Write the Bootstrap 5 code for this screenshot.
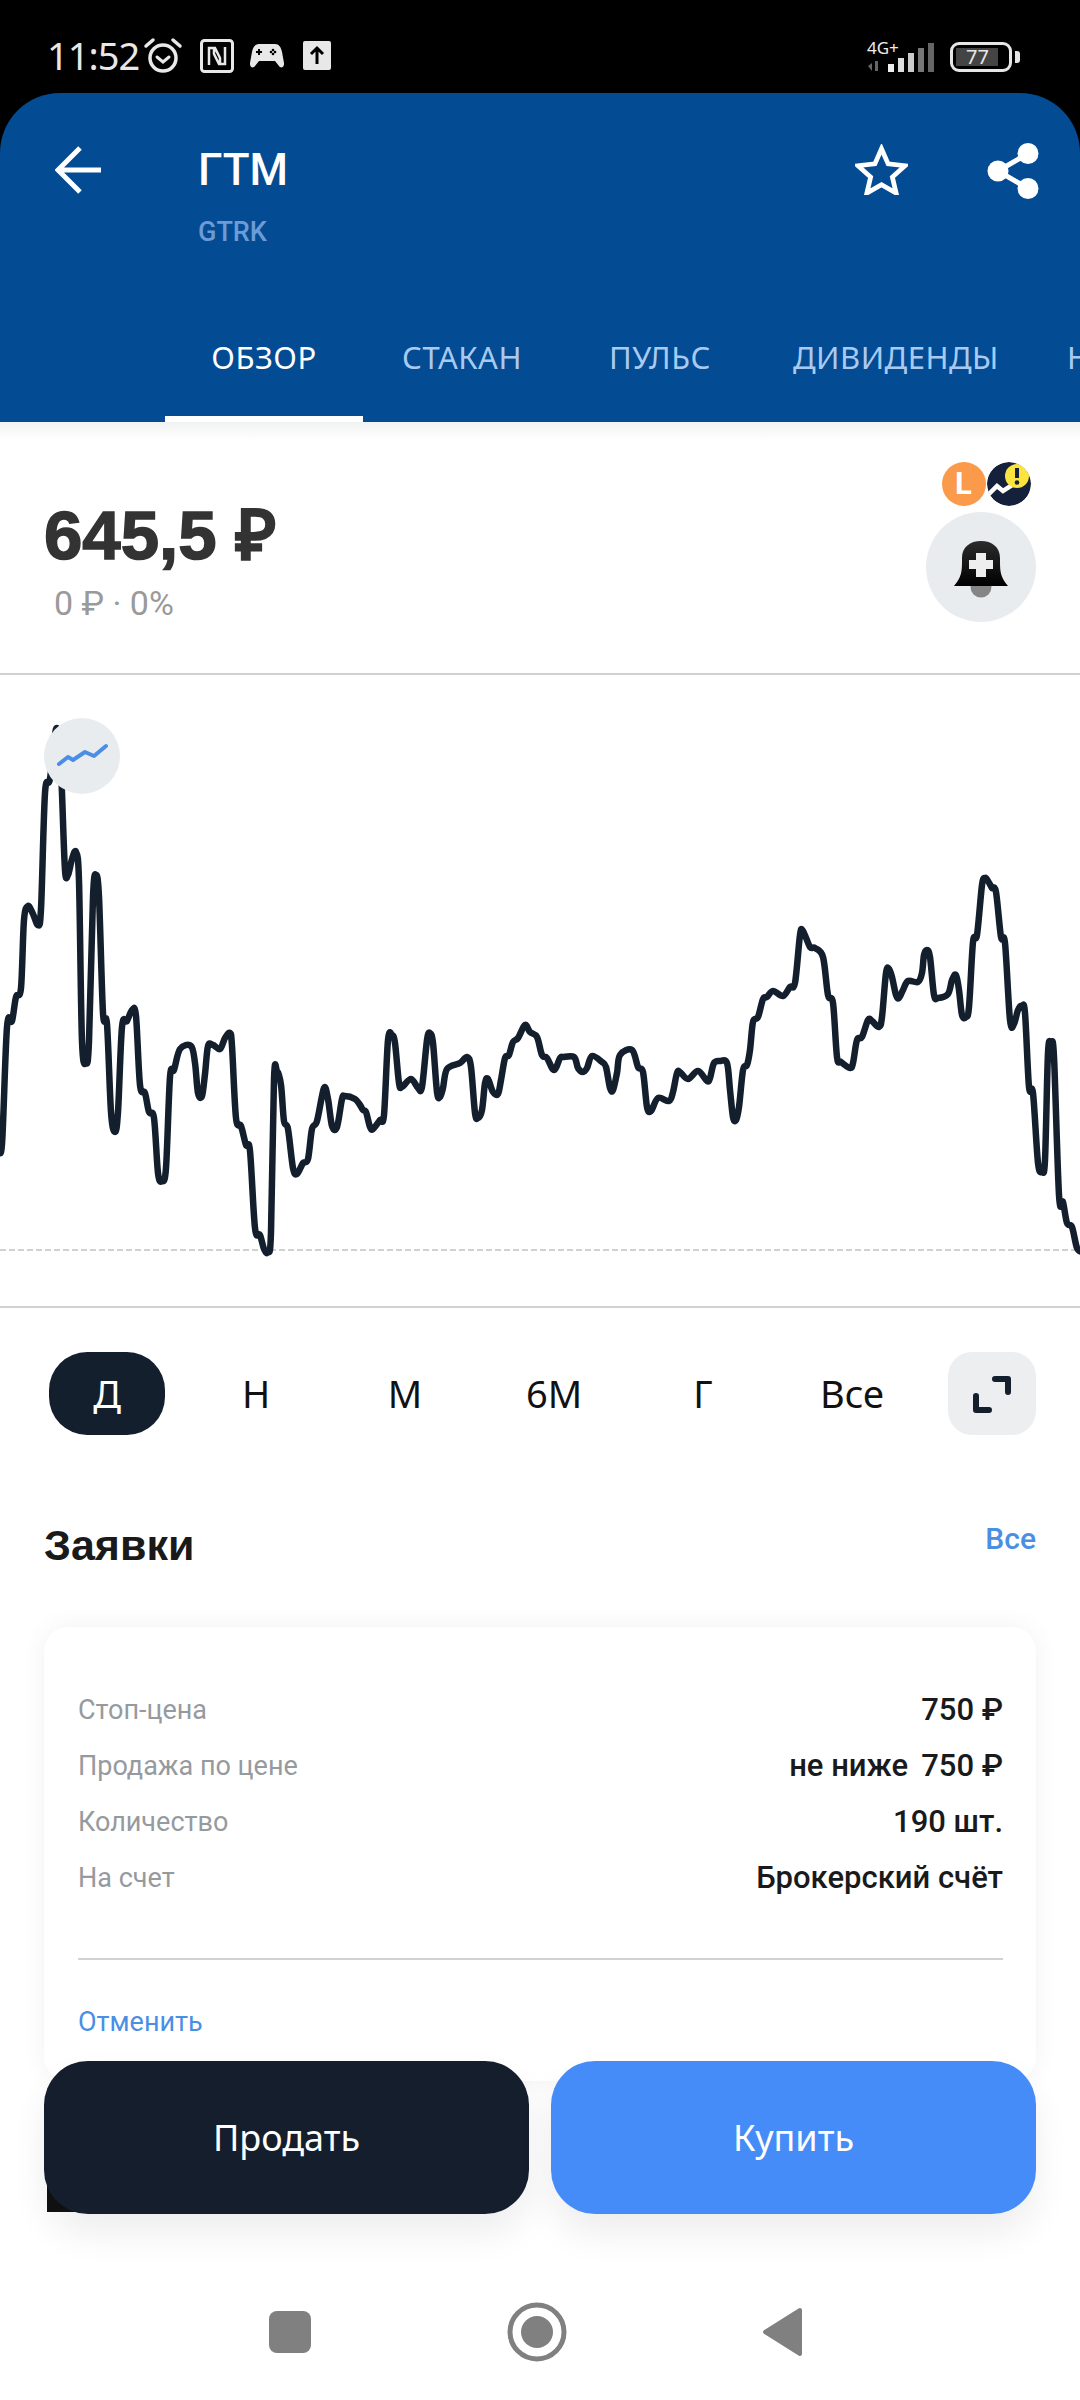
<!DOCTYPE html>
<html lang="ru">
<head>
    <meta charset="UTF-8">
    <meta name="viewport" content="width=device-width, initial-scale=1.0">
    <title>ГТМ</title>
    <link rel="stylesheet" href="https://cdn.jsdelivr.net/npm/bootstrap@5.3.0/dist/css/bootstrap.min.css">
    <script src="https://cdn.jsdelivr.net/npm/bootstrap@5.3.0/dist/js/bootstrap.bundle.min.js"></script>
    <style>
        body {
            width: 1080px;
            height: 2400px;
            overflow: hidden;
            background: #fff;
            font-family: Roboto, sans-serif;
            color: #1a1a1a;
        }
        .hand { font-family: "Noto Sans", sans-serif; }
        .screen { width: 1080px; height: 2400px; }

        /* status bar */
        .status-bar {
            height: 93px;
            background: #000;
            color: #e8e8e8;
            padding: 18px 60px 0 47px;
        }
        .status-time { font-size: 38px; width: 92px; letter-spacing: -1px; }
        .net-col { width: 36px; margin-right: -15px; }
        .net-label { font-size: 17px; line-height: 1; color: #eee; white-space: nowrap; }
        .batt {
            width: 62px; height: 30px;
            border: 3px solid #e6e6e6;
            border-radius: 9px;
            padding: 3px;
        }
        .batt-fill {
            width: 42px; height: 100%;
            background: #444;
            font-size: 20px;
            line-height: 18px;
            color: #e6e6e6;
            padding-left: 10px;
        }
        .batt-nub { width: 5px; height: 12px; background: #e6e6e6; border-radius: 0 3px 3px 0; margin-left: 3px; }
        .nfc-ico { margin-left: 17px; }
        .up-ico { margin-left: 19px; }

        /* header */
        .top-head-wrap { background: #000; }
        .top-head {
            height: 329px;
            background: #034b92;
            border-radius: 60px 60px 0 0;
            color: #fff;
        }
        .title-row { padding: 50px 41px 0 55px; height: 181px; }
        .title-box { margin-left: 97px; }
        .ticker-name { font-size: 44px; font-weight: 500; line-height: 54px; }
        .ticker-code { font-size: 27px; font-weight: 500; line-height: 34px; color: #6c9bd6; margin-top: 18px; }
        .star-ico { margin-right: 79px; margin-top: 1px; }
        .tabs-row { margin-top: 55px; padding-left: 165px; flex-wrap: nowrap; overflow: hidden; height: 93px; }
        .tab-item {
            min-width: 198px;
            flex: 0 0 auto;
            padding: 0 34px;
            text-align: center;
            font-size: 31px;
            line-height: 56px;
            letter-spacing: .5px;
            color: #a9caf0;
            white-space: nowrap;
            height: 93px;
        }
        .tab-item.active { color: #fff; border-bottom: 6px solid #fff; }

        /* price */
        .head-shadow { height: 18px; background: linear-gradient(#f1f2f3, #fff); }
        .price-box { height: 235px; border-bottom: 2px solid #cfd1d3; padding: 0 44px; }
        .price-value {
            font-family: "Liberation Sans", sans-serif;
            font-weight: 700;
            font-size: 69px;
            line-height: 80px;
            color: #333;
            margin-top: 56px;
            -webkit-text-stroke: 1.5px #333;
        }
        .price-change { font-size: 34px; line-height: 38px; color: #9a9a9a; padding-left: 10px; margin-top: 8px; }
        .badge-dot { width: 44px; height: 44px; border-radius: 50%; }
        .badge-orange { background: #fb9a4b; color: #fff; font-size: 31px; font-weight: 700; line-height: 44px; text-align: center; }
        .badge-pair { gap: 1px; margin-left: 10px; }
        .bell-btn { width: 110px; height: 110px; border-radius: 50%; background: #e9ecee; margin-top: 6px; }
        .badges-col { padding-top: 22px; }

        /* chart */
        .chart-box { height: 633px; border-bottom: 2px solid #cfd1d3; }
        .chart-box svg { display: block; }
        .trend-btn {
            left: 44px; top: 43px;
            width: 76px; height: 76px;
            border-radius: 50%;
            background: #e9ecee;
        }

        /* period switch */
        .period-row { padding: 44px 44px 0 49px; gap: 33px; }
        .period-item {
            width: 116px; height: 83px;
            border-radius: 38px;
            font-size: 38px;
            color: #111;
        }
        .period-item.active { background: #141f2e; color: #fff; }
        .expand-btn { width: 88px; height: 83px; border-radius: 24px; background: #eceef0; margin-left: 5px; }

        /* orders */
        .orders-head { padding: 85px 44px 0 44px; height: 192px; }
        .orders-title { font-family: "Liberation Sans", sans-serif; font-weight: 700; font-size: 43px; line-height: 50px; }
        .orders-all { font-size: 30px; font-weight: 500; color: #4a8fe3; line-height: 40px; margin-top: -1px; }
        .order-card {
            margin: 0 44px;
            height: 454px;
            border: 0;
            border-radius: 24px;
            box-shadow: 0 0 26px rgba(0,0,0,.06);
            padding: 55px 33px 0 34px;
        }
        .order-row { height: 56px; }
        .order-label { font-size: 27px; color: #969a9e; }
        .order-val { font-size: 31px; font-weight: 500; color: #1a1a1a; }
        .order-wide { margin-right: 13px; }
        .order-line { border-top: 2px solid #cfd1d3; margin-top: 52px; }
        .order-cancel { font-size: 27px; color: #4a8fe3; line-height: 40px; margin-top: 42px; }

        /* bottom buttons */
        .deal-bar { left: 44px; right: 44px; top: 2061px; gap: 22px; }
        .deal-btn {
            flex: 1 1 0;
            height: 153px;
            border: 0;
            border-radius: 44px;
            color: #fff;
            font-size: 36px;
            box-shadow: 0 20px 36px rgba(0,0,0,.07);
        }
        .deal-sell { background: #141e2d; }
        .deal-buy { background: #458cf8; }
        .scrap-bit { left: 47px; top: 2180px; width: 30px; height: 32px; background: #111; }

        /* android nav */
        .sys-nav { left: 0; right: 0; top: 2300px; height: 64px; }
        .nav-square { width: 42px; height: 42px; background: #808080; border-radius: 8px; position: absolute; left: 269px; top: 11px; }
        .nav-home { left: 507px; top: 2px; }
        .nav-back { left: 761px; top: 6px; }
    </style>
</head>
<body>
<div class="screen position-relative d-flex flex-column">

    <!-- status bar -->
    <div class="status-bar d-flex align-items-center">
        <div class="status-time hand">11:52</div>
        <svg width="40" height="40" viewBox="0 0 40 40" fill="none" stroke="#e8e8e8" stroke-linecap="round" class="ms-1">
            <circle cx="20" cy="22" r="13" stroke-width="3.5"/>
            <path d="M14 21l6 5 6-5" stroke-width="3"/>
            <path d="M3 10l7-6M37 10l-7-6" stroke-width="3.5"/>
        </svg>
        <svg width="34" height="34" viewBox="0 0 34 34" fill="none" stroke="#e8e8e8" class="nfc-ico">
            <rect x="1.5" y="1.5" width="31" height="31" rx="3" stroke-width="3"/>
            <path d="M9 26V9h6l5 10v6M25 8v17h-6l-5-10V9" stroke-width="2.500"/>
        </svg>
        <svg width="34" height="26" viewBox="0 0 34 26" class="ms-3">
            <path d="M9 1h16c4 0 6 3 7 8l2 11c.5 4-3 6-5 3l-4-5H9l-4 5c-2 3-5.500 1-5-3L2 9c1-5 3-8 7-8z" fill="#e8e8e8"/>
            <path d="M9 6v6M6 9h6" stroke="#000" stroke-width="2"/>
            <circle cx="23" cy="7" r="1.300" fill="#000"/><circle cx="23" cy="11" r="1.300" fill="#000"/><circle cx="21" cy="9" r="1.300" fill="#000"/><circle cx="25" cy="9" r="1.300" fill="#000"/>
        </svg>
        <svg width="28" height="29" viewBox="0 0 28 29" class="up-ico">
            <rect width="28" height="29" rx="2" fill="#e8e8e8"/>
            <path d="M14 23V8M8 13l6-6 6 6" fill="none" stroke="#000" stroke-width="3"/>
        </svg>
        <div class="ms-auto d-flex align-items-end">
            <div class="net-col d-flex flex-column">
                <div class="net-label hand">4G+</div>
                <svg width="18" height="12" viewBox="0 0 18 12" class="mt-1"><path d="M1 6l4-3v8zM8 1h3v10H8z" fill="#666"/></svg>
            </div>
            <svg width="46" height="29" viewBox="0 0 46 29">
                <rect x="0" y="21" width="6" height="8" fill="#eee"/>
                <rect x="10" y="15" width="6" height="14" fill="#ddd"/>
                <rect x="20" y="10" width="6" height="19" fill="#ccc"/>
                <rect x="30" y="5" width="6" height="24" fill="#777"/>
                <rect x="40" y="0" width="6" height="29" fill="#666"/>
            </svg>
            <div class="d-flex align-items-center ms-3">
                <div class="batt"><div class="batt-fill hand">77</div></div>
                <div class="batt-nub"></div>
            </div>
        </div>
    </div>

    <!-- header -->
    <div class="top-head-wrap">
        <div class="top-head">
            <div class="title-row d-flex align-items-start">
                <svg width="46" height="54" viewBox="0 0 46 54" fill="none" stroke="#fff" stroke-width="5" class="flex-shrink-0">
                    <path d="M46 27H3M25 5L3 27l22 22"/>
                </svg>
                <div class="title-box flex-grow-1">
                    <div class="ticker-name">ГТМ</div>
                    <div class="ticker-code">GTRK</div>
                </div>
                <svg width="53" height="51" viewBox="0 0 56 54" fill="none" stroke="#fff" stroke-width="5" class="star-ico">
                    <path d="M28 5l7 16 18 2-13.500 12 4 17L28 43l-15.500 9 4-17L3 23l18-2z"/>
                </svg>
                <svg width="52" height="56" viewBox="0 0 52 56" fill="#fff">
                    <circle cx="11" cy="28" r="10.500"/><circle cx="41" cy="10.500" r="10.500"/><circle cx="41" cy="45.500" r="10.500"/>
                    <path d="M11 28L41 10.500M11 28l30 17.500" stroke="#fff" stroke-width="5"/>
                </svg>
            </div>
            <div class="nav tabs-row hand">
                <div class="tab-item active">ОБЗОР</div>
                <div class="tab-item">СТАКАН</div>
                <div class="tab-item">ПУЛЬС</div>
                <div class="tab-item">ДИВИДЕНДЫ</div>
                <div class="tab-item">НОВОСТИ</div>
            </div>
        </div>
    </div>
    <div class="head-shadow"></div>

    <!-- price -->
    <div class="price-box d-flex justify-content-between">
        <div>
            <div class="price-value">645,5 ₽</div>
            <div class="price-change">0 ₽ · 0%</div>
        </div>
        <div class="badges-col d-flex flex-column align-items-center">
            <div class="badge-pair d-flex">
                <div class="badge-dot badge-orange">L</div>
                <svg class="badge-dot" viewBox="0 0 44 44">
                    <circle cx="22" cy="22" r="22" fill="#15203a"/>
                    <path d="M0 34l10-10 6 5 14-9" fill="none" stroke="#fff" stroke-width="4.500"/>
                    <circle cx="30" cy="14" r="12" fill="#fbe43f"/>
                    <path d="M30 6v10" stroke="#15203a" stroke-width="4"/><circle cx="30" cy="20.500" r="2.300" fill="#15203a"/>
                </svg>
            </div>
            <div class="bell-btn">
                <svg width="110" height="110" viewBox="0 0 110 110">
                    <defs><linearGradient id="bellFill" x1="0" y1="0" x2="0" y2="1"><stop offset="0" stop-color="#2c2c2c"/><stop offset="1" stop-color="#000"/></linearGradient></defs>
                    <circle cx="55" cy="75" r="10.500" fill="#858585"/>
                    <path d="M28 74c7-8 8-14 8-24v-4c0-11 8-17 19-17s19 6 19 17v4c0 10 1 16 8 24z" fill="url(#bellFill)"/>
                    <path d="M50 41h10v7h7v9h-7v8H50v-8h-7v-9h7z" fill="#eee"/>
                </svg>
            </div>
        </div>
    </div>

    <!-- chart -->
    <div class="chart-box position-relative">
        <svg width="1080" height="632" viewBox="0 675 1080 632">
            <line x1="0" y1="1250" x2="1080" y2="1250" stroke="#cfd1d3" stroke-width="2" stroke-dasharray="6 3"/>
            <path id="priceLine" fill="none" stroke="#141f2e" stroke-width="6.500" stroke-linejoin="round" stroke-linecap="round"/>
        </svg>
        <div class="trend-btn position-absolute">
            <svg width="76" height="76" viewBox="0 0 76 76" fill="none" stroke="#4a8ee6" stroke-width="4" stroke-linecap="round" stroke-linejoin="round">
                <path d="M15 46l9-7 5 3 12-8 9 4 12-10"/>
            </svg>
        </div>
    </div>

    <!-- period -->
    <div class="period-row d-flex hand">
        <div class="period-item active d-flex align-items-center justify-content-center">Д</div>
        <div class="period-item d-flex align-items-center justify-content-center">Н</div>
        <div class="period-item d-flex align-items-center justify-content-center">М</div>
        <div class="period-item d-flex align-items-center justify-content-center">6М</div>
        <div class="period-item d-flex align-items-center justify-content-center">Г</div>
        <div class="period-item d-flex align-items-center justify-content-center">Все</div>
        <div class="expand-btn d-flex align-items-center justify-content-center">
            <svg width="42" height="42" viewBox="0 0 42 42" fill="none" stroke="#141f2e" stroke-width="6" stroke-linecap="round" stroke-linejoin="round">
                <path d="M24 6h13v13M5 23v14h13"/>
            </svg>
        </div>
    </div>

    <!-- orders -->
    <div class="orders-head d-flex justify-content-between align-items-start">
        <div class="orders-title">Заявки</div>
        <div class="orders-all">Все</div>
    </div>
    <div class="card order-card">
        <div class="order-row d-flex justify-content-between align-items-center"><span class="order-label">Стоп-цена</span><span class="order-val">750 ₽</span></div>
        <div class="order-row d-flex justify-content-between align-items-center"><span class="order-label">Продажа по цене</span><span class="order-val"><span class="order-wide">не ниже</span>750 ₽</span></div>
        <div class="order-row d-flex justify-content-between align-items-center"><span class="order-label">Количество</span><span class="order-val">190 шт.</span></div>
        <div class="order-row d-flex justify-content-between align-items-center"><span class="order-label">На счет</span><span class="order-val">Брокерский счёт</span></div>
        <div class="order-line"></div>
        <div class="order-cancel">Отменить</div>
    </div>

    <!-- buttons over the list -->
    <div class="scrap-bit position-absolute"></div>
    <div class="deal-bar position-absolute d-flex hand">
        <button class="deal-btn deal-sell" type="button">Продать</button>
        <button class="deal-btn deal-buy" type="button">Купить</button>
    </div>

    <!-- android navigation -->
    <div class="sys-nav position-absolute">
        <div class="nav-square"></div>
        <svg class="nav-home position-absolute" width="60" height="60" viewBox="0 0 60 60">
            <circle cx="30" cy="30" r="27" fill="none" stroke="#808080" stroke-width="5"/>
            <circle cx="30" cy="30" r="16" fill="#808080"/>
        </svg>
        <svg class="nav-back position-absolute" width="42" height="52" viewBox="0 0 42 52">
            <path d="M39 4L4 26l35 22z" fill="#808080" stroke="#808080" stroke-width="4" stroke-linejoin="round"/>
        </svg>
    </div>
</div>

<script>
    // price points in page coordinates, traced by x
    const pts = [[-2,1146],[2,1144],[7,1027],[12,1021],[16,997],[21,988],[24,920],[28,906],[33,914],[38,925],[41,909],[45,793],[50,779],[56,729],[60,749],[62,793],[65,870],[68,875],[72,859],[76,852],[79,881],[82,1041],[86,1063],[89,1041],[93,897],[96,875],[99,897],[103,1013],[107,1024],[111,1112],[115,1132],[118,1112],[122,1027],[127,1021],[132,1010],[136,1016],[140,1085],[145,1093],[149,1112],[154,1118],[158,1173],[162,1181],[166,1168],[170,1077],[174,1070],[180,1049],[191,1046],[195,1063],[198,1093],[202,1096],[205,1074],[208,1046],[213,1045],[220,1049],[225,1038],[230,1033],[232,1046],[236,1118],[241,1126],[246,1145],[250,1151],[255,1228],[260,1235],[264,1249],[268,1252],[271,1232],[274,1079],[277,1071],[281,1085],[284,1121],[288,1129],[293,1168],[297,1174],[303,1163],[308,1159],[312,1129],[317,1121],[324,1088],[328,1099],[332,1126],[337,1127],[342,1099],[345,1096],[355,1099],[360,1105],[363,1110],[366,1112],[370,1127],[373,1129],[380,1120],[384,1115],[388,1040],[392,1035],[395,1043],[399,1083],[402,1087],[411,1079],[418,1088],[422,1087],[427,1040],[430,1033],[433,1043],[437,1092],[440,1097],[443,1088],[447,1069],[460,1063],[467,1057],[471,1067],[475,1113],[478,1118],[482,1110],[485,1083],[488,1079],[493,1092],[498,1094],[501,1080],[505,1058],[509,1055],[513,1042],[518,1038],[525,1025],[530,1032],[537,1037],[542,1055],[547,1058],[554,1070],[560,1058],[563,1057],[574,1057],[578,1068],[583,1072],[587,1068],[592,1056],[602,1062],[606,1067],[610,1088],[613,1090],[617,1073],[620,1055],[632,1050],[638,1067],[643,1072],[647,1107],[651,1111],[658,1098],[669,1101],[673,1092],[677,1073],[680,1072],[688,1079],[698,1071],[707,1081],[710,1078],[714,1063],[720,1061],[727,1063],[730,1090],[733,1117],[736,1120],[739,1107],[743,1070],[747,1065],[750,1050],[753,1022],[758,1017],[763,999],[767,997],[773,991],[783,996],[790,987],[795,983],[800,935],[803,931],[810,947],[815,948],[823,957],[828,995],[833,1003],[837,1057],[841,1062],[850,1068],[853,1063],[857,1040],[862,1037],[868,1020],[872,1021],[879,1027],[882,1017],[886,973],[889,969],[892,977],[896,995],[899,998],[903,990],[908,981],[918,982],[922,973],[924,955],[927,950],[930,957],[934,995],[938,998],[948,994],[952,980],[956,975],[959,990],[962,1015],[966,1017],[969,1007],[973,942],[977,935],[982,885],[985,878],[988,881],[992,888],[996,892],[1001,937],[1005,943],[1010,1020],[1014,1024],[1018,1010],[1022,1006],[1025,1013],[1029,1087],[1033,1093],[1038,1163],[1042,1171],[1045,1160],[1048,1053],[1051,1044],[1054,1057],[1059,1195],[1063,1202],[1067,1223],[1072,1227],[1077,1248],[1082,1252]];

    // catmull-rom to bezier so the line stays round
    let d = `M${pts[0][0]} ${pts[0][1]}`;
    for (let i = 0; i < pts.length - 1; i++) {
        const p0 = pts[Math.max(i - 1, 0)], p1 = pts[i], p2 = pts[i + 1], p3 = pts[Math.min(i + 2, pts.length - 1)];
        const c1x = p1[0] + (p2[0] - p0[0]) / 6, c1y = p1[1] + (p2[1] - p0[1]) / 6;
        const c2x = p2[0] - (p3[0] - p1[0]) / 6, c2y = p2[1] - (p3[1] - p1[1]) / 6;
        d += `C${c1x.toFixed(1)} ${c1y.toFixed(1)} ${c2x.toFixed(1)} ${c2y.toFixed(1)} ${p2[0]} ${p2[1]}`;
    }
    document.getElementById('priceLine').setAttribute('d', d);
</script>
</body>
</html>
